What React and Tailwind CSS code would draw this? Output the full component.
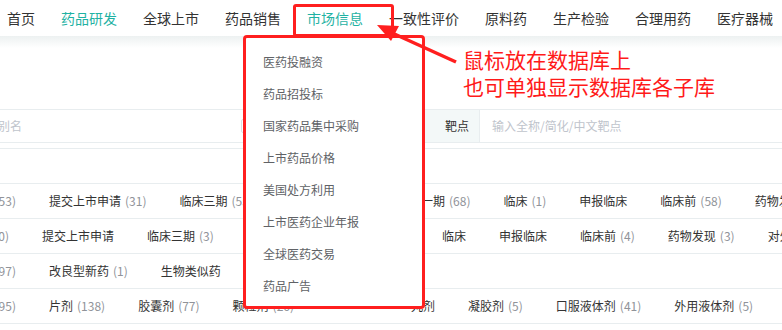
import React from "react";

const navItems = ["首页", "药品研发", "全球上市", "药品销售", "市场信息", "一致性评价", "原料药", "生产检验", "合理用药", "医疗器械"];

const menuItems = ["医药投融资", "药品招投标", "国家药品集中采购", "上市药品价格", "美国处方利用", "上市医药企业年报", "全球医药交易", "药品广告"];

// each row: first item clipped at the left edge, left items, items past the dropdown
const rows = [
  {
    edge: 16,
    first: ["药物发现", "153"],
    split: 397,
    left: [["提交上市申请", "31"], ["临床三期", "55"], ["临床二期", "40"]],
    right: [["临床一期", "68"], ["临床", "1"], ["申报临床"], ["临床前", "58"], ["药物发现", "12"]],
  },
  {
    edge: 9,
    first: ["上市", "20"],
    split: 442,
    left: [["提交上市申请"], ["临床三期", "3"], ["临床二期", "2"]],
    right: [["临床"], ["申报临床"], ["临床前", "4"], ["药物发现", "3"], ["对外授权", "2"]],
  },
  {
    edge: 16,
    first: ["创新药", "97"],
    split: 397,
    left: [["改良型新药", "1"], ["生物类似药"]],
    right: [],
  },
  {
    edge: 16,
    first: ["注射剂", "195"],
    split: 411,
    left: [["片剂", "138"], ["胶囊剂", "77"], ["颗粒剂", "26"]],
    right: [["丸剂"], ["凝胶剂", "5"], ["口服液体剂", "41"], ["外用液体剂", "5"]],
  },
];

function Item({ name, count }) {
  return (
    <span className="whitespace-nowrap text-[#333]">
      {name}
      {count && <span className="ml-[4px] text-[#909399]">({count})</span>}
    </span>
  );
}

export default function App() {
  return (
    <div
      className="relative w-[782px] h-[330px] overflow-hidden bg-white text-[12px]"
      style={{ fontFamily: '"Noto Sans CJK SC", "Noto Sans", sans-serif' }}
    >
      {/* top nav */}
      <div className="flex items-center h-[36px] pl-[7px] gap-[26px] text-[14px] text-[#333] whitespace-nowrap">
        {navItems.map((n) => (
          <span key={n} className={n === "药品研发" || n === "市场信息" ? "text-[#1fb2a3]" : ""}>
            {n}
          </span>
        ))}
      </div>
      <div className="h-[12px] bg-gradient-to-b from-[#edf1f1] to-white" />
      <div className="h-[61px]" />

      {/* search row */}
      <div className="grid grid-cols-[241px_184px_54px_1fr] h-[34px] border-y border-[#e8edef]">
        <div className="flex items-center overflow-hidden">
          <div className="w-[22px] flex justify-end overflow-hidden whitespace-nowrap text-[#c0c4cc]">
            输入通用名/商品名/别名
          </div>
        </div>
        <div className="flex items-center">
          <div className="w-[150px] h-[14px] border border-[#dcdfe6] rounded-[2px]" />
        </div>
        <div className="flex items-center pl-[20px] bg-[#f3f8f8] text-[#333]">靶点</div>
        <div className="flex items-center pl-[12px] border-l border-[#e8edef] text-[#c0c4cc]">
          输入全称/简化/中文靶点
        </div>
      </div>

      <div className="mt-[5px] h-[35px] border-t border-[#e8edef]" />

      {rows.map((r, i) => (
        <div
          key={i}
          className={
            "grid h-[35px] border-t border-[#e8edef] " +
            (i === rows.length - 1 ? "h-[36px] border-b " : "") +
            (r.split === 442 ? "grid-cols-[442px_1fr]" : r.split === 411 ? "grid-cols-[411px_1fr]" : "grid-cols-[397px_1fr]")
          }
        >
          <div className="flex items-center gap-[33px] overflow-hidden">
            <div
              className={
                "flex justify-end overflow-hidden shrink-0 " + (r.edge === 9 ? "w-[9px]" : "w-[16px]")
              }
            >
              <Item name={r.first[0]} count={r.first[1]} />
            </div>
            {r.left.map((it, j) => (
              <Item key={j} name={it[0]} count={it[1]} />
            ))}
          </div>
          <div className="flex items-center gap-[33px] overflow-hidden">
            {r.right.map((it, j) => (
              <Item key={j} name={it[0]} count={it[1]} />
            ))}
          </div>
        </div>
      ))}

      {/* hover dropdown */}
      <div className="absolute left-[243px] top-[35px] w-[182px] h-[274px] border-[3px] border-[#ff1f1f] rounded-[4px] bg-white pt-[8px] pl-[17px]">
        {menuItems.map((m) => (
          <div key={m} className="h-[32px] flex items-center text-[#606266] whitespace-nowrap">
            {m}
          </div>
        ))}
      </div>

      {/* annotation */}
      <div className="absolute left-[293px] top-[4px] w-[101px] h-[33px] border-[3px] border-[#ff1f1f] rounded-[3px]" />
      <svg className="absolute left-0 top-0 pointer-events-none" width="782" height="330">
        <line x1="456" y1="62" x2="390" y2="32" stroke="#ff1f1f" strokeWidth="3.5" />
        <polygon points="377,25 399,26 391,41" fill="#ff1f1f" />
      </svg>
      <div className="absolute left-[463px] top-[46px] text-[21px] leading-[27px] text-[#ff1a1a] whitespace-nowrap">
        <div>鼠标放在数据库上</div>
        <div>也可单独显示数据库各子库</div>
      </div>
    </div>
  );
}
